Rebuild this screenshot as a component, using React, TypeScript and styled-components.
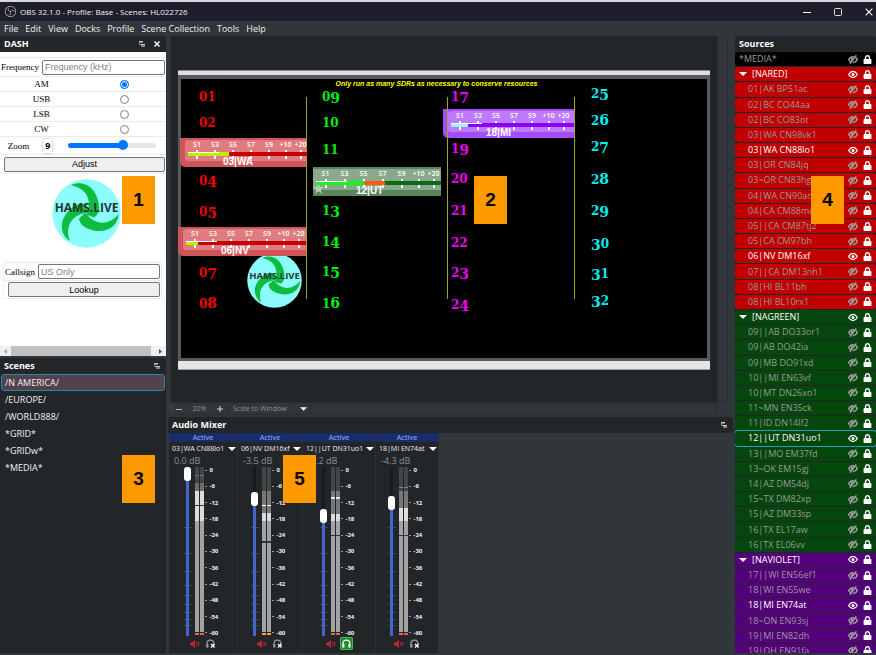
import React from 'react';
import styled, { createGlobalStyle, css } from 'styled-components';
import { FaLock } from 'react-icons/fa';
import { SiObsstudio } from 'react-icons/si';

const ui = '"Open Sans", "Noto Sans", sans-serif';
const arial = '"Liberation Sans", Arial, sans-serif';
const serif = '"Liberation Serif", "Times New Roman", serif';

const Global = createGlobalStyle`
  * { box-sizing: border-box; }
  html, body { margin: 0; height: 100%; }
  #root { height: 100%; }
  body { background: #31363b; font: 9px/12px ${ui}; color: #eff0f1; overflow: hidden; }
  button, input, select { font: inherit; color: inherit; margin: 0; }
  ul { list-style: none; margin: 0; padding: 0; }
  h2, p { margin: 0; }
`;

/* ---------- window frame ---------- */

const Window = styled.div`
  height: 100vh;
  display: flex;
  flex-direction: column;
  border-top: 2px solid #d9d9db;
`;

const TitleBar = styled.header`
  flex: none;
  height: 19px;
  padding: 0 1px 0 5px;
  display: flex;
  align-items: center;
  gap: 4px;
  background: #1e1d2b;
  color: #f2f2f4;
  font-size: 8px;
`;

const WindowButtons = styled.div`
  margin-left: auto;
  display: flex;
  gap: 19px;
  button { width: 12px; }
`;

const PlainButton = styled.button`
  display: flex;
  align-items: center;
  justify-content: center;
  padding: 0;
  border: 0;
  background: none;
  svg { display: block; }
`;

const MenuBar = styled.nav`
  flex: none;
  height: 15px;
  padding: 0 4px;
  display: flex;
  align-items: center;
  gap: 7px;
  background: #31363b;
`;

const Body = styled.div`
  flex: 1;
  min-height: 0;
  display: grid;
  grid-template-columns: 166px minmax(0, 1fr) 141px;
  column-gap: 2px;
  padding-bottom: 2px;
`;

const Column = styled.div`
  display: flex;
  flex-direction: column;
  gap: 2px;
  min-height: 0;
  min-width: 0;
`;

const Dock = styled.section<{ $grow?: boolean }>`
  position: relative;
  display: flex;
  flex-direction: column;
  min-height: 0;
  background: #232629;
  border-radius: 3px 3px 0 0;
  ${p => (p.$grow ? css`flex: 1;` : css`flex: none;`)}
`;

const DockHeader = styled.div`
  flex: none;
  height: 16px;
  padding: 0 6px 0 4px;
  display: flex;
  align-items: center;
  gap: 9px;
  h2 { font-size: 9px; line-height: 12px; font-weight: 700; margin-right: auto; color: #fcfcfc; }
`;

const Callout = styled.div<{ $x: number; $y: number }>`
  position: absolute;
  z-index: 5;
  left: ${p => p.$x}px;
  top: ${p => p.$y}px;
  width: 33px;
  height: 48px;
  display: flex;
  align-items: center;
  justify-content: center;
  background: #ff9900;
  color: #000;
  font: 700 19px/22px ${arial};
`;

/* ---------- web panel ---------- */

const WebPage = styled.div`
  height: 304px;
  display: flex;
  flex-direction: column;
  background: #fff;
  color: #000;
  font: 9px/12px ${serif};
`;

const TuneForm = styled.form`
  margin-top: 5px;
`;

const FormRow = styled.div<{ $h: number }>`
  height: ${p => p.$h}px;
  display: flex;
  align-items: center;
  border-top: 1px solid #ececec;
`;

const FieldLabel = styled.label`
  padding: 0 3px 0 1px;
`;

const TextInput = styled.input`
  flex: 1;
  min-width: 0;
  height: 15px;
  margin-right: 1px;
  padding: 0 2px;
  border: 1px solid #767676;
  border-radius: 2px;
  background: #fff;
  font: 9px/11px ${arial};
  &::placeholder { color: #808080; }
`;

const Half = styled.div`
  flex: 1;
  display: flex;
  justify-content: center;
`;

const Radio = styled.input`
  appearance: none;
  width: 9px;
  height: 9px;
  border: 1px solid #808080;
  border-radius: 50%;
  background: #fff;
  &:checked {
    border-color: #0075ff;
    background: #0075ff;
    box-shadow: inset 0 0 0 1px #fff;
  }
`;

const ZoomValue = styled.output`
  width: 9px;
  margin-left: 11px;
  text-align: center;
  font: 700 9px/14px ${ui};
  box-shadow: 0 0 2px #999;
`;

const ZoomRange = styled.input<{ $fill: number }>`
  appearance: none;
  flex: 1;
  min-width: 0;
  height: 10px;
  margin: 0 10px 0 16px;
  background: none;
  &::-webkit-slider-runnable-track {
    height: 5px;
    border-radius: 3px;
    background: linear-gradient(to right, #0075ff ${p => p.$fill}%, #e6e6e6 ${p => p.$fill}%);
  }
  &::-webkit-slider-thumb {
    appearance: none;
    width: 10px;
    height: 10px;
    margin-top: -3px;
    border-radius: 50%;
    background: #0075ff;
  }
`;

const WebButton = styled.button`
  flex: 1;
  height: 15px;
  margin: 0 1px 0 4px;
  padding: 0;
  border: 1px solid #767676;
  border-radius: 2px;
  background: #efefef;
  font: 9px/12px ${arial};
`;

const LogoArea = styled.div`
  height: 89px;
  padding: 5px 0 0 52px;
  border-top: 1px solid #ececec;
`;

const LookupForm = styled.form`
  margin: 0 4px 0 3px;
  border: 1px solid #f0f0f0;
  border-top: 0;
`;

const ScrollBar = styled.div`
  margin-top: auto;
  height: 10px;
  display: grid;
  grid-template-columns: 11px 1fr 15px;
  background: #f1f1f1;
  div { background: #c1c1c1; }
`;

/* ---------- scenes ---------- */

const SceneRow = styled.li<{ $on?: boolean }>`
  height: 17px;
  margin: 0 1px;
  padding: 0 3px;
  display: flex;
  align-items: center;
  border: 1px solid ${p => (p.$on ? '#1d8ea3' : 'transparent')};
  border-radius: 3px;
  background: ${p => (p.$on ? '#55414d' : 'none')};
`;

/* ---------- preview ---------- */

const PreviewDock = styled.section`
  position: relative;
  margin: 0 5px 0 3px;
  height: 379px;
  display: grid;
  grid-template-columns: minmax(0, 1fr) 11px;
  grid-template-rows: minmax(0, 1fr) 13px;
`;

const Viewport = styled.div`
  display: flex;
  align-items: center;
  justify-content: center;
  padding-top: 2px;
  background: #232629;
`;

const ScrollTrack = styled.div`
  border: 1px solid #282c30;
  border-top: 0;
`;

const PreviewBar = styled.div`
  display: flex;
  align-items: center;
  border: 1px solid #282c30;
  border-left: 1px solid #3b4045;
  color: #8d9194;
  font-size: 7px;
  line-height: 10px;
`;

const ZoomGroup = styled.div`
  width: 56px;
  padding: 0 4px;
  display: flex;
  align-items: center;
  justify-content: space-between;
  border-right: 1px solid #282c30;
`;

const ScaleSelect = styled.button`
  width: 83px;
  height: 11px;
  padding: 0 3px 0 5px;
  display: flex;
  align-items: center;
  justify-content: space-between;
  border: 0;
  border-right: 1px solid #282c30;
  background: none;
`;

const Canvas = styled.div`
  position: relative;
  flex: none;
  width: 532px;
  height: 300px;
  background: #000;
  border: solid #5a5a5a;
  border-width: 9px 3px 12px;
  &::before, &::after {
    content: '';
    position: absolute;
    left: -3px;
    right: -3px;
  }
  &::before { top: -9px; height: 4px; background: #e2dde2; border-top: 1px solid #8a888a; }
  &::after { bottom: -12px; height: 8px; background: #e4e4e4; border-bottom: 1px solid #a0a0a0; }
`;

const Notice = styled.p`
  position: absolute;
  left: 0;
  right: 0;
  top: 0;
  padding-right: 15px;
  text-align: center;
  white-space: nowrap;
  color: #ffff00;
  font: italic 700 7px/9px ${arial};
`;

const Divider = styled.div<{ $x: number }>`
  position: absolute;
  left: ${p => p.$x}px;
  top: 18px;
  width: 1px;
  height: 202px;
  background: #a3a32c;
`;

const SlotNumber = styled.div<{ $x: number; $y: number; $c: string }>`
  position: absolute;
  left: ${p => p.$x}px;
  top: ${p => p.$y - 13}px;
  color: ${p => p.$c};
  font: 700 14px/16px "DejaVu Serif", serif;
  white-space: nowrap;
`;

const Digit = styled.span<{ $kind: 'low' | 'up' | 'down' }>`
  line-height: 0;
  font-size: ${p => (p.$kind === 'low' ? 12 : 14)}px;
  vertical-align: ${p => (p.$kind === 'down' ? '-2px' : 'baseline')};
`;

interface Skin { base: string; face: string; track: string; level: string; }

const MeterBox = styled.div<{ $x: number; $y: number; $w: number; $skin: Skin; $square?: boolean }>`
  position: absolute;
  left: ${p => p.$x}px;
  top: ${p => p.$y}px;
  width: ${p => p.$w}px;
  height: 29px;
  overflow: hidden;
  padding: 2px 0 0 ${p => (p.$square ? 0 : 5)}px;
  background: ${p => p.$skin.base};
  border-bottom-left-radius: ${p => (p.$square ? 0 : 5)}px;
`;

const MeterFace = styled.div<{ $skin: Skin; $square?: boolean }>`
  position: relative;
  height: 21px;
  padding-left: 3px;
  display: flex;
  border-radius: ${p => (p.$square ? 0 : '3px 0 0 3px')};
  background: ${p => p.$skin.face};
`;

const MeterTick = styled.div<{ $w: number }>`
  position: relative;
  z-index: 1;
  flex: none;
  width: ${p => p.$w}px;
  text-align: center;
  color: #fff;
  font: 600 7px/10px ${ui};
  &::after {
    content: '';
    display: block;
    width: 2px;
    height: 9px;
    margin: 0 auto;
    background: #fff;
  }
`;

const MeterTrack = styled.div<{ $c: string }>`
  position: absolute;
  z-index: 2;
  left: 3px;
  right: 0;
  top: 12px;
  height: 4px;
  display: flex;
  background: ${p => p.$c};
`;

const MeterLevel = styled.div<{ $w: number; $c: string }>`
  width: ${p => p.$w}px;
  background: ${p => p.$c};
`;

const MeterPeak = styled.div`
  position: absolute;
  left: 0;
  top: 0;
  width: 31px;
  height: 1px;
  background: #fff;
`;

const MeterName = styled.div`
  position: absolute;
  z-index: 3;
  left: 43px;
  bottom: 0;
  color: #fff;
  font: 700 10px/11px ${arial};
`;

const Pinned = styled.div<{ $x: number; $y: number }>`
  position: absolute;
  left: ${p => p.$x}px;
  top: ${p => p.$y}px;
  svg { display: block; }
`;

/* ---------- audio mixer ---------- */

const MixerArea = styled.div`
  flex: 1;
  min-height: 0;
  display: flex;
  padding-left: 1px;
  background: #31363b;
`;

const Strip = styled.div<{ $w: number }>`
  flex: none;
  width: ${p => p.$w}px;
  display: flex;
  flex-direction: column;
  background: #232629;
  border-right: 1px solid #2b2f33;
`;

const ActiveTag = styled.div`
  height: 9px;
  text-align: center;
  background: #1a2c68;
  color: #7f9bea;
  font: 600 7px/9px ${ui};
`;

const ChannelName = styled.button`
  height: 13px;
  padding: 0 1px 0 3px;
  display: flex;
  align-items: center;
  justify-content: space-between;
  border: 0;
  background: none;
  white-space: nowrap;
  font: 7px/12px ${ui};
`;

const Db = styled.div`
  padding-left: 5px;
  height: 12px;
  font-size: 9px;
  line-height: 11px;
  color: #8c8f91;
`;

const Fader = styled.div`
  height: 169px;
  width: 39px;
  margin: 0 auto;
  display: flex;
`;

const FaderTrack = styled.div`
  position: relative;
  width: 8px;
  margin-right: 3px;
  svg { display: block; }
`;

const FaderInput = styled.input<{ $fill: number }>`
  appearance: none;
  position: absolute;
  left: 0;
  top: 0;
  width: 8px;
  height: 169px;
  writing-mode: vertical-lr;
  direction: rtl;
  background: none;
  &::-webkit-slider-runnable-track {
    width: 3px;
    height: 169px;
    background: linear-gradient(to top, #4565d0 ${p => p.$fill}%, #191b1e ${p => p.$fill}%);
  }
  &::-webkit-slider-thumb {
    appearance: none;
    width: 7px;
    height: 14px;
    margin-left: -2px;
    border-radius: 3px;
    background: #fff;
  }
`;

const Scale = styled.div`
  flex: 1;
  display: flex;
  flex-direction: column;
  justify-content: space-between;
  padding-left: 1px;
  font: 700 6px/6px ${ui};
  span { display: flex; align-items: center; }
  span::before { content: ''; width: 2px; height: 1px; margin-right: 3px; background: #9a9c9e; }
`;

const StripButtons = styled.div`
  display: flex;
  justify-content: center;
  align-items: center;
  gap: 4px;
  height: 15px;
`;

const MonitorButton = styled(PlainButton)<{ $on?: boolean }>`
  width: 13px;
  height: 13px;
  border-radius: 2px;
  color: ${p => (p.$on ? '#fff' : '#9a9c9e')};
  background: ${p => (p.$on ? '#1f8a2c' : 'none')};
  box-shadow: ${p => (p.$on ? 'inset 0 0 0 1px #3fb950' : 'none')};
`;

/* ---------- sources ---------- */

const SourceClip = styled.div`
  flex: 1;
  min-height: 0;
  overflow: hidden;
`;

const SourceList = styled.ul`
  height: calc(100% + 6px);
  display: grid;
  grid-auto-rows: minmax(0, 1fr);
`;

const SourceRow = styled.li<{ $bg: string; $on?: boolean; $sel?: boolean; $group?: boolean }>`
  margin: 0 0 1px;
  padding: 0 4px 0 ${p => (p.$group ? 4 : 13)}px;
  display: flex;
  align-items: center;
  gap: 5px;
  border-radius: 3px;
  background: ${p => p.$bg};
  color: ${p => (p.$on ? '#ffffff' : '#999a98')};
  box-shadow: ${p => (p.$sel ? '0 0 0 1px #1aa3b8' : 'none')};
  white-space: nowrap;
  span { flex: 1; }
`;

/* ---------- icons ---------- */

const FloatIcon = () => (
  <svg width="6" height="6" viewBox="0 0 6 6"><path d="M0 0h4v1.500H0zM2 3h4v1.500H2z" fill="#c8cacc" /><path d="M.5 1v2.500H2M2.500 4v1.500h3V4" fill="none" stroke="#8b8e90" /></svg>
);
const CloseIcon = ({ s = 6 }: { s?: number }) => (
  <svg width={s} height={s} viewBox="0 0 6 6"><path d="M.5.5l5 5M5.500.5l-5 5" stroke="#fff" strokeWidth={s > 6 ? 0.8 : 1.4} /></svg>
);
const Caret = ({ s = 8 }: { s?: number }) => (
  <svg width={s} height="4" viewBox="0 0 8 4"><path d="M0 0h8L4 4z" fill="#fff" /></svg>
);
const EyeIcon = () => (
  <svg width="10" height="9" viewBox="0 0 10 9">
    <path d="M.6 4.500C2 2.300 3.400 1.400 5 1.400s3 .9 4.400 3.100C8 6.700 6.600 7.600 5 7.600S2 6.700.6 4.500z" fill="none" stroke="#fff" strokeWidth="1.300" />
    <circle cx="5" cy="4.500" r="1.500" fill="#fff" />
  </svg>
);
const EyeOffIcon = () => (
  <svg width="10" height="9" viewBox="0 0 10 9" fill="none" stroke="#a3a4a2" strokeWidth="1.400">
    <path d="M3 7C2 6.400 1.200 5.600.7 4.500 2 2.300 3.600 1.500 5.900 1.700M7.400 2.300c.8.500 1.400 1.200 1.900 2.200C8.200 6.500 6.800 7.400 4.900 7.500" />
    <path d="M8.300.4L1.900 8.700M3.600 5.200c-.3-1 .3-1.900 1.200-2" />
  </svg>
);
const MuteIcon = () => (
  <svg width="10" height="8" viewBox="0 0 10 8">
    <path d="M0 2.500h2L5 0v8L2 5.500H0z" fill="#c0243c" />
    <path d="M6.300 2.500l3 3M9.300 2.500l-3 3" stroke="#c0243c" strokeWidth="1.300" />
  </svg>
);
const PhonesIcon = ({ off }: { off?: boolean }) => (
  <svg width="9" height="9" viewBox="0 0 9 9">
    <path d="M1 8V4.500a3.400 3.400 0 0 1 6.800 0V8" fill="none" stroke="currentColor" strokeWidth="1.200" />
    <path d="M.4 5h2v3.600h-2z" fill="currentColor" />
    {off ? <path d="M5 5l3.500 3.500M8.500 5L5 8.500" stroke="#fff" strokeWidth="1.300" /> : <path d="M6.400 5h2v3.600h-2z" fill="currentColor" />}
  </svg>
);

const arm = 'M-47-85C-8-104 34-76 38-20C38-4 34 4 24 12L0 4C16-32 8-74-47-85Z';
const HamsLogo = ({ size }: { size: number }) => (
  <svg width={size} height={size} viewBox="-104 -104 208 208" role="img" aria-label="HAMS.LIVE">
    <circle r="103" fill="#8cfdfd" />
    <g fill="#0fbc3f">
      <path d={arm} />
      <path d={arm} transform="rotate(120)" />
      <path d={arm} transform="rotate(240)" />
    </g>
    <text x="0" y="-6" textAnchor="middle" fontFamily='"Open Sans", sans-serif' fontWeight="700" fontSize="36" fill="#27352f">HAMS.LIVE</text>
  </svg>
);

/* ---------- data ---------- */

const menus = ['File', 'Edit', 'View', 'Docks', 'Profile', 'Scene Collection', 'Tools', 'Help'];
const modes = ['AM', 'USB', 'LSB', 'CW'];
const scenes = ['/N AMERICA/', '/EUROPE/', '/WORLD888/', '*GRID*', '*GRIDw*', '*MEDIA*'];

type Slot = [string, number];
const slotColumns: { x: number; color: string; slots: Slot[] }[] = [
  { x: 18, color: '#f00000', slots: [['01', 22], ['02', 48], ['04', 106], ['05', 137], ['07', 198], ['08', 229]] },
  { x: 141, color: '#00ee10', slots: [['09', 22], ['10', 48], ['11', 75], ['13', 136], ['14', 167], ['15', 197], ['16', 229]] },
  { x: 270, color: '#f000f0', slots: [['17', 22], ['19', 74], ['20', 104], ['21', 136], ['22', 168], ['23', 198], ['24', 230]] },
  { x: 410, color: '#00eef0', slots: [['25', 19], ['26', 46], ['27', 72], ['28', 105], ['29', 136], ['30', 169], ['31', 199], ['32', 226]] },
];

const red: Skin = { base: '#cf5558', face: '#e07c80', track: '#c40000', level: '#b8f000' };
const green: Skin = { base: '#5a855c', face: '#8aa88c', track: '#0b6a14', level: '#10f81c' };
const violet: Skin = { base: '#a44dff', face: '#bd7aff', track: '#8a00fa', level: '#9cf4ff' };

const meters = [
  { name: '03|WA', x: -1, y: 59, w: 127, skin: red, level: 41, extra: 0 },
  { name: '06|NV', x: -3, y: 148, w: 128, skin: red, level: 12, extra: 0 },
  { name: '12|UT', x: 132, y: 88, w: 128, skin: green, level: 48, extra: 21, square: true },
  { name: '18|MI', x: 262, y: 30, w: 131, skin: violet, level: 17, extra: 0 },
];

type Seg = [number, number, string];
const channels: { name: string; db: string; w: number; fader: number; foot: string; on?: boolean; segs: Seg[] }[] = [
  { name: '03|WA CN88lo1', db: '0.0 dB', w: 69, fader: 100, foot: '#ff5a46', segs: [[0, 16, '#444546'], [8, 1, '#777'], [16, 8, '#6c6c6c'], [24, 30, '#dcdcdc'], [38, 1, '#33383c']] },
  { name: '06|NV DM16xf', db: '-3.5 dB', w: 65, fader: 84, foot: '#ffa040', segs: [[0, 24, '#444546'], [24, 22, '#777'], [38, 1, '#fff'], [46, 8, '#dcdcdc'], [74, 2, '#33383c']] },
  { name: '12||UT DN31uo1', db: '-7.2 dB', w: 73, fader: 73, foot: '#ff5a46', on: true, segs: [[0, 24, '#444546'], [24, 23, '#777'], [30, 2, '#e8e8e8'], [47, 7, '#dcdcdc'], [68, 1, '#33383c']] },
  { name: '18|MI EN74at', db: '-4.3 dB', w: 63, fader: 81, foot: '#ff5a46', segs: [[0, 24, '#444546'], [20, 1, '#888'], [24, 17, '#777'], [41, 13, '#dcdcdc'], [68, 1, '#33383c']] },
];
const faderTicks = [60, 86, 104, 118, 128, 137, 145, 152, 158];
const dbScale = ['0', '-6', '-12', '-18', '-24', '-30', '-36', '-42', '-48', '-54', '-60'];

const groups = [
  { name: '[NARED]', bg: '#c00000', items: ['01|AK BP51ac', '02|BC CO44aa', '02|BC CO83ot', '03|WA CN98vk1', '03|WA CN88lo1', '03|OR CN84jq', '03~OR CN83hg', '04|WA CN90ao', '04|CA CM88mc1', '05||CA CM87tj2', '05|CA CM97bh', '06|NV DM16xf', '07||CA DM13nh1', '08|HI BL11bh', '08|HI BL10rx1'] },
  { name: '[NAGREEN]', bg: '#04460c', items: ['09||AB DO33or1', '09|AB DO42ia', '09|MB DO91xd', '10||MI EN63vf', '10|MT DN26xo1', '11~MN EN35ck', '11|ID DN14lf2', '12||UT DN31uo1', '13||MO EM37fd', '13~OK EM15gj', '14|AZ DM54dj', '15~TX DM82xp', '15|AZ DM33sp', '16|TX EL17aw', '16|TX EL06vv'] },
  { name: '[NAVIOLET]', bg: '#55007b', items: ['17||WI EN56ef1', '18|WI EN55we', '18|MI EN74at', '18~ON EN93sj', '19|MI EN82dh', '19|OH EN91fa'] },
];
const visible = ['03|WA CN88lo1', '06|NV DM16xf', '12||UT DN31uo1', '18|MI EN74at'];

/* ---------- parts ---------- */

const OldStyleNumber = ({ text }: { text: string }) => (
  <>
    {text.split('').map((d, i) => (
      <Digit key={i} $kind={'012'.includes(d) ? 'low' : '68'.includes(d) ? 'up' : 'down'}>{d}</Digit>
    ))}
  </>
);

const SignalMeter = ({ m }: { m: (typeof meters)[number] }) => (
  <MeterBox $x={m.x} $y={m.y} $w={m.w} $skin={m.skin} $square={m.square}>
    <MeterFace $skin={m.skin} $square={m.square}>
      {['S1', 'S3', 'S5', 'S7', 'S9', '+10', '+20'].map((t, i) => (
        <MeterTick key={t} $w={i > 4 ? 15 : m.square ? 19 : 18}>{t}</MeterTick>
      ))}
      <MeterTrack $c={m.skin.track}>
        <MeterLevel $w={m.level} $c={m.skin.level} />
        <MeterLevel $w={m.extra} $c="#ff5a10" />
        <MeterPeak />
      </MeterTrack>
    </MeterFace>
    <MeterName>{m.name}</MeterName>
  </MeterBox>
);

const SourceIcons = ({ on }: { on: boolean }) => (
  <>
    <PlainButton aria-label="Toggle visibility">{on ? <EyeIcon /> : <EyeOffIcon />}</PlainButton>
    <PlainButton aria-label="Toggle lock"><FaLock size={9} color="#fff" /></PlainButton>
  </>
);

export default function App() {
  return (
    <Window>
      <Global />
      <TitleBar>
        <SiObsstudio size={11} />
        OBS 32.1.0 - Profile: Base - Scenes: HL022726
        <WindowButtons>
          <PlainButton aria-label="Minimize"><svg width="12" height="8"><path d="M2 4.500h8" stroke="#fff" /></svg></PlainButton>
          <PlainButton aria-label="Maximize"><svg width="12" height="8"><rect x="2.500" y=".5" width="7" height="7" rx="1" fill="none" stroke="#ddd" /></svg></PlainButton>
          <PlainButton aria-label="Close"><CloseIcon s={8} /></PlainButton>
        </WindowButtons>
      </TitleBar>
      <MenuBar>
        {menus.map(m => <PlainButton key={m}>{m}</PlainButton>)}
      </MenuBar>
      <Body>
        <Column>
          <Dock>
            <DockHeader>
              <h2>DASH</h2>
              <PlainButton aria-label="Float DASH"><FloatIcon /></PlainButton>
              <PlainButton aria-label="Close DASH"><CloseIcon /></PlainButton>
            </DockHeader>
            <WebPage>
              <TuneForm>
                <FormRow $h={19}>
                  <FieldLabel htmlFor="freq">Frequency</FieldLabel>
                  <TextInput id="freq" placeholder="Frequency (kHz)" />
                </FormRow>
                {modes.map(m => (
                  <FormRow key={m} $h={15}>
                    <Half><label htmlFor={m}>{m}</label></Half>
                    <Half><Radio type="radio" name="mode" id={m} defaultChecked={m === 'AM'} /></Half>
                  </FormRow>
                ))}
                <FormRow $h={18}>
                  <FieldLabel htmlFor="zoom">&nbsp;&nbsp;&nbsp;Zoom</FieldLabel>
                  <ZoomValue>9</ZoomValue>
                  <ZoomRange id="zoom" type="range" min={0} max={14} defaultValue={9} $fill={62} />
                </FormRow>
                <FormRow $h={19}><WebButton type="button">Adjust</WebButton></FormRow>
              </TuneForm>
              <LogoArea><HamsLogo size={69} /></LogoArea>
              <LookupForm>
                <FormRow $h={18}>
                  <FieldLabel htmlFor="call">Callsign</FieldLabel>
                  <TextInput id="call" placeholder="US Only" />
                </FormRow>
                <FormRow $h={18}><WebButton type="button">Lookup</WebButton></FormRow>
              </LookupForm>
              <ScrollBar>
                <svg width="11" height="10"><path d="M7 3v5L4 5.500z" fill="#a3a3a3" /></svg>
                <div />
                <svg width="15" height="10"><path d="M8 3v5l3-2.500z" fill="#505050" /></svg>
              </ScrollBar>
            </WebPage>
            <Callout $x={122} $y={140}>1</Callout>
          </Dock>
          <Dock $grow>
            <DockHeader>
              <h2>Scenes</h2>
              <PlainButton aria-label="Float Scenes"><FloatIcon /></PlainButton>
            </DockHeader>
            <ul>
              {scenes.map((s, i) => <SceneRow key={s} $on={i === 0}>{s}</SceneRow>)}
            </ul>
            <Callout $x={122} $y={97}>3</Callout>
          </Dock>
        </Column>

        <Column>
          <PreviewDock>
            <Viewport>
              <Canvas>
                <Notice>Only run as many SDRs as necessary to conserve resources</Notice>
                {slotColumns.map(c => c.slots.map(([n, y]) => (
                  <SlotNumber key={n} $x={c.x} $y={y} $c={c.color}><OldStyleNumber text={n} /></SlotNumber>
                )))}
                <Pinned $x={66} $y={174}><HamsLogo size={55} /></Pinned>
                {meters.map(m => <SignalMeter key={m.name} m={m} />)}
                {[125, 266, 393].map(x => <Divider key={x} $x={x} />)}
                <Pinned $x={132} $y={104}>
                  <svg width="11" height="11" viewBox="0 0 10 10"><path d="M5 0l1.200 3.700H10L7 6l1.100 3.800L5 7.500 1.900 9.800 3 6 0 3.700h3.800z" fill="#b9cbb9" /></svg>
                </Pinned>
              </Canvas>
            </Viewport>
            <ScrollTrack />
            <PreviewBar>
              <ZoomGroup>
                <PlainButton aria-label="Zoom out"><svg width="6" height="6"><path d="M0 3.500h6" stroke="#b5b7b9" /></svg></PlainButton>
                20%
                <PlainButton aria-label="Zoom in"><svg width="6" height="6"><path d="M0 3h6M3 0v6" stroke="#d5d7d9" /></svg></PlainButton>
              </ZoomGroup>
              <ScaleSelect>Scale to Window<Caret s={7} /></ScaleSelect>
            </PreviewBar>
            <Callout $x={303} $y={140}>2</Callout>
          </PreviewDock>
          <Dock $grow>
            <DockHeader>
              <h2>Audio Mixer</h2>
              <PlainButton aria-label="Float Audio Mixer"><FloatIcon /></PlainButton>
            </DockHeader>
            <MixerArea>
              {channels.map(c => (
                <Strip key={c.name} $w={c.w}>
                  <ActiveTag>Active</ActiveTag>
                  <ChannelName>{c.name}<Caret /></ChannelName>
                  <Db>{c.db}</Db>
                  <Fader>
                    <FaderTrack>
                      <svg width="8" height="169"><path d={faderTicks.map(t => `M0 ${t}.5h8`).join('')} stroke="#454a4f" /></svg>
                      <FaderInput type="range" aria-label={`${c.name} volume`} defaultValue={c.fader} $fill={c.fader} />
                    </FaderTrack>
                    <svg width="9" height="169">
                      <rect width="9" height="165" fill="#a2a2a2" />
                      {c.segs.map(([y, h, f], i) => <rect key={i} y={y} width="9" height={h} fill={f} />)}
                      <rect y="166" width="9" height="2" fill={c.foot} />
                      <rect x="4" width="1" height="169" fill="#232629" />
                    </svg>
                    <Scale>{dbScale.map(d => <span key={d}>{d}</span>)}</Scale>
                  </Fader>
                  <StripButtons>
                    <PlainButton aria-label="Mute"><MuteIcon /></PlainButton>
                    <MonitorButton aria-label="Monitor" $on={c.on}><PhonesIcon off={!c.on} /></MonitorButton>
                  </StripButtons>
                </Strip>
              ))}
            </MixerArea>
            <Callout $x={115} $y={38}>5</Callout>
          </Dock>
        </Column>

        <Dock $grow>
          <DockHeader>
            <h2>Sources</h2>
          </DockHeader>
          <SourceClip>
            <SourceList>
              <SourceRow $bg="#000" $group><span>*MEDIA*</span><SourceIcons on={false} /></SourceRow>
              {groups.map(g => (
                <React.Fragment key={g.name}>
                  <SourceRow $bg={g.bg} $on $group><Caret /><span>{g.name}</span><SourceIcons on /></SourceRow>
                  {g.items.map(s => (
                    <SourceRow key={s} $bg={g.bg} $on={visible.includes(s)} $sel={s.startsWith('12')}>
                      <span>{s}</span>
                      <SourceIcons on={visible.includes(s)} />
                    </SourceRow>
                  ))}
                </React.Fragment>
              ))}
            </SourceList>
          </SourceClip>
          <Callout $x={76} $y={140}>4</Callout>
        </Dock>
      </Body>
    </Window>
  );
}
